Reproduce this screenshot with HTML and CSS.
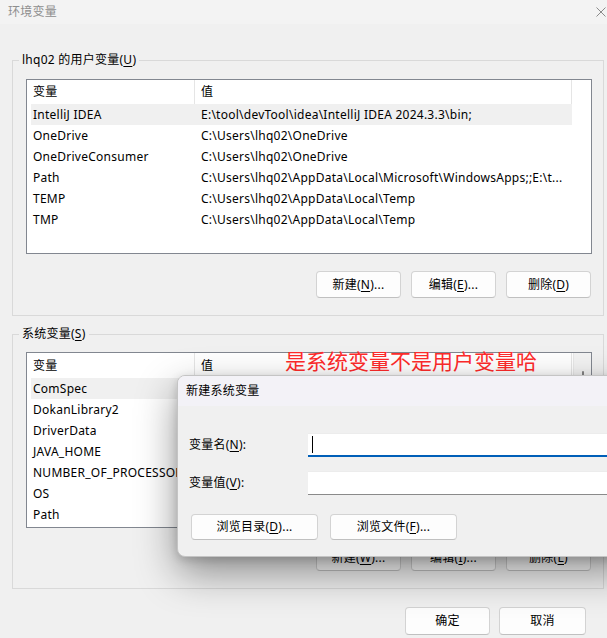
FILE: index.html
```html
<!DOCTYPE html>
<html lang="zh-CN">
<head>
<meta charset="utf-8">
<title>环境变量</title>
<link rel="stylesheet" href="styles.css">
</head>
<body>
<div class="titlebar">
  <span class="title">环境变量</span>
  <svg class="close" width="10" height="10" viewBox="0 0 10 10"><path d="M0.5 0.5L9.5 9.5M9.5 0.5L0.5 9.5" stroke="#8a8a8a" stroke-width="1" fill="none"/></svg>
</div>
<div class="content">
  <fieldset class="group group-user">
    <legend>lhq02 的用户变量(<u>U</u>)</legend>
    <div class="lv">
      <div class="lv-main">
        <div class="lv-head"><div class="c1">变量</div><div class="c2">值</div></div>
        <div class="row hl"><div class="c1">IntelliJ IDEA</div><div class="c2">E:\tool\devTool\idea\IntelliJ IDEA 2024.3.3\bin;</div></div>
        <div class="row"><div class="c1">OneDrive</div><div class="c2">C:\Users\lhq02\OneDrive</div></div>
        <div class="row"><div class="c1">OneDriveConsumer</div><div class="c2">C:\Users\lhq02\OneDrive</div></div>
        <div class="row"><div class="c1">Path</div><div class="c2">C:\Users\lhq02\AppData\Local\Microsoft\WindowsApps;;E:\t...</div></div>
        <div class="row"><div class="c1">TEMP</div><div class="c2">C:\Users\lhq02\AppData\Local\Temp</div></div>
        <div class="row"><div class="c1">TMP</div><div class="c2">C:\Users\lhq02\AppData\Local\Temp</div></div>
      </div>
    </div>
    <div class="btns">
      <button class="btn">新建(<u>N</u>)...</button>
      <button class="btn">编辑(<u>E</u>)...</button>
      <button class="btn">删除(<u>D</u>)</button>
    </div>
  </fieldset>

  <fieldset class="group group-sys">
    <legend>系统变量(<u>S</u>)</legend>
    <div class="lv lv-sys">
      <div class="lv-main">
        <div class="lv-head"><div class="c1">变量</div><div class="c2">值</div></div>
        <div class="row hl"><div class="c1">ComSpec</div><div class="c2">C:\Windows\system32\cmd.exe</div></div>
        <div class="row"><div class="c1">DokanLibrary2</div><div class="c2">C:\Program Files\Dokan\Dokan Library-2.0.6\</div></div>
        <div class="row"><div class="c1">DriverData</div><div class="c2">C:\Windows\System32\Drivers\DriverData</div></div>
        <div class="row"><div class="c1">JAVA_HOME</div><div class="c2">E:\tool\devTool\jdk</div></div>
        <div class="row"><div class="c1">NUMBER_OF_PROCESSORS</div><div class="c2">16</div></div>
        <div class="row"><div class="c1">OS</div><div class="c2">Windows_NT</div></div>
        <div class="row"><div class="c1">Path</div><div class="c2">C:\Windows\system32;C:\Windows;</div></div>
      </div>
      <div class="lv-scroll"><div class="thumb"></div></div>
    </div>
    <div class="btns">
      <button class="btn">新建(<u>W</u>)...</button>
      <button class="btn">编辑(<u>I</u>)...</button>
      <button class="btn">删除(<u>L</u>)</button>
    </div>
  </fieldset>

  <div class="footer">
    <button class="btn btn-ok">确定</button>
    <button class="btn btn-cancel">取消</button>
  </div>
</div>

<div class="annot">是系统变量不是用户变量哈</div>

<div class="dialog">
  <div class="dlg-title">新建系统变量</div>
  <div class="dlg-body">
    <div class="dlg-form">
      <label class="dlg-label">变量名(<u>N</u>):</label>
      <div class="field field-active"><span class="caret"></span></div>
      <label class="dlg-label">变量值(<u>V</u>):</label>
      <div class="field"></div>
    </div>
    <div class="dlg-btns">
      <button class="btn btn-wide">浏览目录(<u>D</u>)...</button>
      <button class="btn btn-wide">浏览文件(<u>F</u>)...</button>
    </div>
  </div>
</div>
</body>
</html>
```

FILE: styles.css
```css
* { box-sizing: border-box; }

html, body {
  margin: 0;
  padding: 0;
}

body {
  width: 607px;
  height: 638px;
  overflow: hidden;
  position: relative;
  background: #f0f0f0;
  font-family: "Noto Sans", "Noto Sans CJK SC", sans-serif;
  font-size: 12px;
  line-height: 16px;
  letter-spacing: 0.25px;
  color: #000;
}

u { text-decoration: underline; text-underline-offset: 2px; }

.titlebar {
  height: 24px;
  background: #f3f3f3;
  display: flex;
  align-items: center;
  justify-content: space-between;
  padding: 0 1px 0 8px;
  color: #8e8e8e;
}

.title { font-size: 12px; }

.content {
  padding: 28px 4px 0 12px;
}

.group {
  margin: 0;
  width: 592px;
  min-width: 0;
  border: 1px solid #d9d9d9;
  padding: 11px 11px 17px 13px;
}

.group legend {
  padding: 0 3px;
  margin-left: -7px;
  line-height: 16px;
}

.group-sys {
  margin-top: 10px;
  padding-top: 10px;
}

.lv {
  height: 175px;
  border: 1px solid #828790;
  background: #fff;
  display: flex;
}

.lv-sys { height: 176px; }

.lv-main {
  flex: 1;
  padding-left: 4px;
  overflow: hidden;
}

.lv-head {
  height: 24px;
  display: flex;
  align-items: center;
}

.lv-sys .lv-head { height: 25px; }

.lv-head .c1 {
  width: 163px;
  padding-left: 2px;
}

.lv-head .c2 {
  width: 378px;
  height: 100%;
  display: flex;
  align-items: center;
  padding-left: 6px;
  border-left: 1px solid #e5e5e5;
  border-right: 1px solid #e5e5e5;
}

.row {
  width: 541px;
  height: 21px;
  display: flex;
  align-items: center;
  white-space: nowrap;
}

.row.hl { background: #f0f0f0; }

.row .c1 {
  width: 163px;
  padding-left: 2px;
  overflow: hidden;
  flex: none;
}

.row .c2 {
  padding-left: 7px;
  overflow: hidden;
}

.lv-scroll {
  width: 18px;
  background: #f3f3f3;
  border-left: 1px solid #e8e8e8;
  display: flex;
  justify-content: center;
  padding-top: 18px;
}

.thumb {
  width: 2px;
  height: 60px;
  background: #858585;
  border-radius: 1px;
}

.btns {
  display: flex;
  justify-content: flex-end;
  gap: 10px;
  margin-top: 17px;
  padding-right: 1px;
}

.group-sys .btns { margin-top: 16px; }

.btn {
  width: 85px;
  height: 27px;
  padding: 0;
  margin: 0;
  background: #fdfdfd;
  border: 1px solid #d3d3d3;
  border-bottom-color: #c0c0c0;
  border-radius: 4px;
  font-family: inherit;
  font-size: 12px;
  line-height: 16px;
  letter-spacing: inherit;
  color: #000;
}

.footer {
  display: flex;
  justify-content: flex-end;
  gap: 9px;
  margin-top: 18px;
  padding-right: 17px;
}

.btn-ok { width: 85px; height: 28px; }
.btn-cancel { width: 87px; height: 28px; }

.annot {
  position: absolute;
  left: 285px;
  top: 348px;
  font-family: "Noto Sans CJK SC", sans-serif;
  font-size: 21px;
  line-height: 24px;
  letter-spacing: 0;
  color: #ff2b2b;
  white-space: nowrap;
}

.dialog {
  position: absolute;
  left: 177px;
  top: 375px;
  width: 460px;
  height: 182px;
  background: #f0f0f0;
  border: 1px solid #c4c4c4;
  border-radius: 8px;
  box-shadow: 0 16px 40px rgba(0, 0, 0, 0.42), 0 3px 10px rgba(0, 0, 0, 0.16);
  overflow: hidden;
}

.dlg-title {
  height: 30px;
  background: #f3f2f7;
  padding-left: 8px;
  line-height: 30px;
}

.dlg-body {
  padding: 27px 0 0 11px;
}

.dlg-form {
  display: grid;
  grid-template-columns: 119px 1fr;
  row-gap: 14px;
  align-items: center;
}

.dlg-label { line-height: 16px; }

.field {
  height: 24px;
  background: #fff;
  border-top: 1px solid #ececec;
  border-bottom: 1px solid #8a8a8a;
  display: flex;
  align-items: center;
}

.field-active {
  border-bottom: 2px solid #005fb8;
}

.caret {
  width: 1px;
  height: 17px;
  background: #000;
  margin-left: 4px;
}

.dlg-btns {
  display: flex;
  gap: 12px;
  margin-top: 19px;
  padding-left: 2px;
}

.btn-wide {
  width: 127px;
  height: 26px;
}
```
